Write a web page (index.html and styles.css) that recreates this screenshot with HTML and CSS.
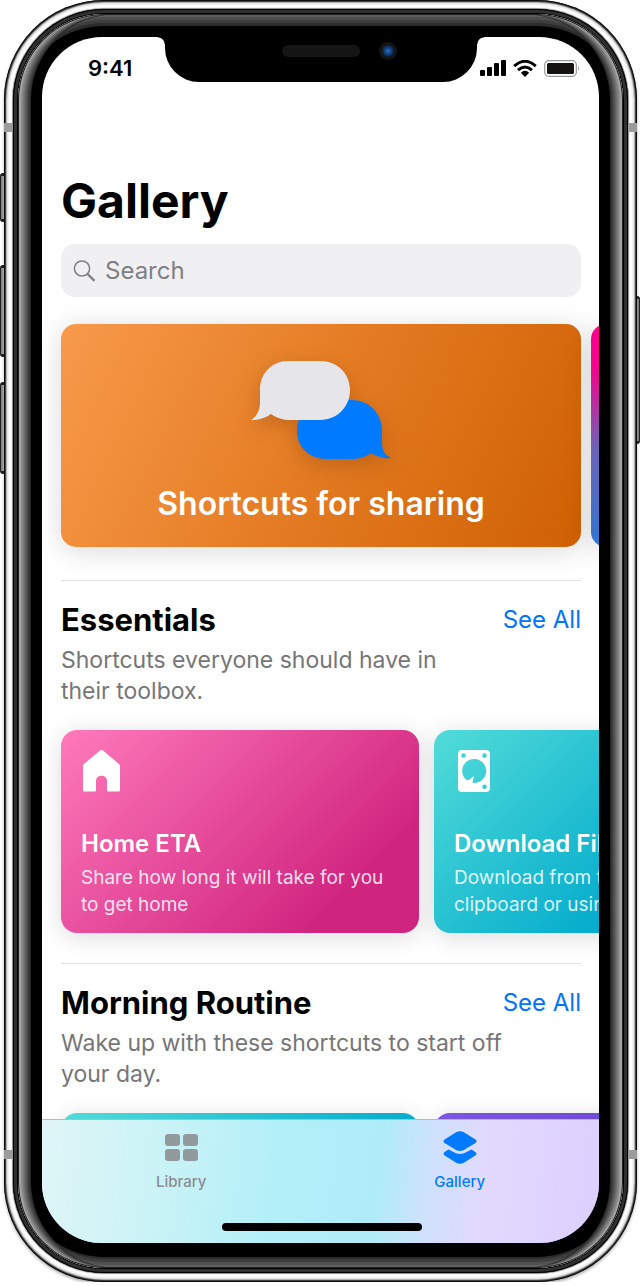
FILE: index.html
```html
<!DOCTYPE html>
<html lang="en">
<head>
<meta charset="utf-8">
<meta name="viewport" content="width=device-width, initial-scale=1">
<title>Gallery</title>
<link rel="stylesheet" href="styles.css">
</head>
<body>
<div class="device">
  <span class="key key-mute"></span>
  <span class="key key-up"></span>
  <span class="key key-down"></span>
  <span class="key key-side"></span>
  <div class="rim">
    <span class="band band-top-left"></span>
    <span class="band band-top-right"></span>
    <span class="band band-bottom-left"></span>
    <span class="band band-bottom-right"></span>
    <div class="edge">
      <div class="glass">
        <div class="screen">
          <div class="notch"><span class="speaker"></span><span class="camera"></span></div>
          <header class="status">
            <time class="clock">9:41</time>
            <div class="indicators">
              <svg width="26" height="16" viewBox="0 0 26 16" aria-hidden="true"><rect y="10" width="5" height="6" rx="1"/><rect x="7" y="7" width="5" height="9" rx="1"/><rect x="14" y="3" width="5" height="13" rx="1"/><rect x="21" width="5" height="16" rx="1"/></svg>
              <svg width="24" height="17" viewBox="0 0 24 17" aria-hidden="true"><path d="M1.2 6.2Q12-3.6 22.8 6.2M5 10.1Q12 3.8 19 10.1" fill="none" stroke="#000" stroke-width="3"/><path d="M7.8 12.7Q12 9 16.2 12.7L12 17Z"/></svg>
              <svg width="36" height="17" viewBox="0 0 36 17" aria-hidden="true"><rect x=".7" y=".7" width="31.600" height="15.600" rx="4" fill="#fff" stroke="#999" stroke-width="1.200"/><rect x="3" y="3" width="27" height="11" rx="1.500" fill="#151310"/><path d="M34 6q2 2.500 0 5z" fill="#999"/></svg>
            </div>
          </header>
          <main class="content">
            <h1 class="title">Gallery</h1>
            <label class="search">
              <svg width="24" height="22" viewBox="0 0 24 22" fill="none" stroke="#808084" aria-hidden="true"><circle cx="9" cy="8.500" r="7.600" stroke-width="1.500"/><path d="m14.500 14 7 6.800" stroke-width="2.400"/></svg>
              <input class="search-input" type="search" placeholder="Search" aria-label="Search">
            </label>
            <div class="features">
              <article class="feature feature-sharing">
                <svg class="bubbles" width="140" height="100" viewBox="0 0 140 100" aria-hidden="true">
                  <path fill="#007aff" d="M76 40h24c18 0 31 13 31 31v12c0 8 3 12 9 15-7 1-13-1-20-5-6 4-12 6-20 6H76c-18 0-30-12-30-28s12-31 30-31z"/>
                  <path fill="#e5e5ea" d="M37 1h32c18 0 30 13 30 29S87 60 69 60H40c-8 0-14-2-20-6-6 4-12 6-20 6 6-4 9-10 9-18V30C9 13 21 1 37 1z"/>
                </svg>
                <h2 class="feature-title">Shortcuts for sharing</h2>
              </article>
              <article class="feature feature-next"></article>
            </div>
            <section class="group">
              <div class="group-head"><h2 class="group-title">Essentials</h2><a class="see-all" href="#essentials">See All</a></div>
              <p class="group-text">Shortcuts everyone should have in their toolbox.</p>
              <div class="cards">
                <article class="card pink">
                  <svg width="37" height="42" viewBox="0 0 37 42" fill="#fff" aria-hidden="true"><path d="M17 .6q1.500-1 3 0L36 14q1 1 1 2v24q0 1.500-1.500 1.500h-10Q24 41.500 24 40V31c0-7-11-7-11 0v9q0 1.500-1.500 1.500h-10Q0 41.500 0 40V16q0-1 1-2z"/></svg>
                  <h3 class="card-title">Home ETA</h3>
                  <p class="card-text">Share how long it will take for you to get home</p>
                </article>
                <article class="card teal">
                  <svg class="drive" width="32" height="42" viewBox="0 0 32 42" aria-hidden="true"><path fill="#fff" fill-rule="evenodd" d="M4 0h24q4 0 4 4v34q0 4-4 4H4q-4 0-4-4V4Q0 0 4 0zM5.500 3.300a2.300 2.300 0 1 0 0 4.600 2.300 2.300 0 0 0 0-4.600zM26.500 3.300a2.300 2.300 0 1 0 0 4.600 2.300 2.300 0 0 0 0-4.600zM26.500 34.500a2.300 2.300 0 1 0 0 4.600 2.300 2.300 0 0 0 0-4.600zM14.500 32.800A12 12 0 1 0 6.500 28q3 4 5.500 1l4-3z"/></svg>
                  <h3 class="card-title">Download File</h3>
                  <p class="card-text short">Download from the clipboard or using</p>
                </article>
              </div>
            </section>
            <section class="group">
              <div class="group-head"><h2 class="group-title">Morning Routine</h2><a class="see-all" href="#morning">See All</a></div>
              <p class="group-text wide">Wake up with these shortcuts to start off your day.</p>
              <div class="cards">
                <article class="card teal"></article>
                <article class="card violet"></article>
              </div>
            </section>
          </main>
          <nav class="tabs">
            <button class="tab" type="button">
              <svg width="34" height="34" viewBox="0 0 34 34" fill="#929a9c" aria-hidden="true"><rect x="1" y="3" width="15" height="12" rx="3"/><rect x="19" y="3" width="15" height="12" rx="3"/><rect x="1" y="18" width="15" height="12" rx="3"/><rect x="19" y="18" width="15" height="12" rx="3"/></svg>
              Library
            </button>
            <button class="tab active" type="button" aria-current="page">
              <svg width="34" height="34" viewBox="0 0 34 34" fill="#007aff" aria-hidden="true"><path d="M13.500 1q3.500-1.600 7 0L32 8.300q3 2 0 4l-11.500 7q-3.500 1.600-7 0L2 12.300q-3-2 0-4z"/><path d="M5.500 18.500 13 22.300q4 1.500 8 0l7.500-3.800 3.500 2.200q3 2 0 4L20.500 32q-3.500 1.600-7 0L2 24.700q-3-2 0-4z"/></svg>
              Gallery
            </button>
            <span class="home-bar"></span>
          </nav>
        </div>
      </div>
    </div>
  </div>
</div>
</body>
</html>
```
FILE: styles.css
```css
* { box-sizing: border-box; }
body {
  margin: 0;
  background: #fff;
  color: #000;
  font-family: Inter, "Liberation Sans", sans-serif;
}
h1, h2, h3, p { margin: 0; }

/* Phone body */
.device {
  position: relative;
  height: calc(100vh - 4px);
  min-height: 600px;
  padding: 0 3px 0 4px;
}
.rim {
  position: relative;
  height: 100%;
  padding: 9px;
  border-radius: 100px;
  background: #fff;
  box-shadow:
    0 2px 3px rgba(0, 0, 0, .3),
    inset 0 0 0 1px #0b0b0b,
    inset 0 0 0 2px #444,
    inset 0 0 1px 3px #aaa,
    inset 0 0 2px 5px #eee;
}
.edge {
  height: 100%;
  padding: 5px;
  border-radius: 91px;
  background: #000;
  box-shadow: 0 0 1px 1px #888, inset 0 0 0 1px #000, inset 0 0 0 4px #303030;
}
.glass {
  position: relative;
  height: 100%;
  padding: 23px 24px 25px;
  border-radius: 86px;
  background: #000;
  box-shadow:
    inset 0 0 0 1px #222,
    inset 3px 0 #a3a3a3, inset -3px 0 #a3a3a3,
    inset 4px 0 #8f8f8f, inset -4px 0 #8f8f8f,
    inset 5px 0 #858585, inset -5px 0 #858585,
    inset 6px 0 #797979, inset -6px 0 #797979,
    inset 7px 0 #6d6d6d, inset -7px 0 #6d6d6d,
    inset 8px 0 #616161, inset -8px 0 #616161,
    inset 9px 0 #555, inset -9px 0 #555,
    inset 10px 0 #4a4a4a, inset -10px 0 #4a4a4a,
    inset 11px 0 #3f3f3f, inset -11px 0 #3f3f3f,
    inset 12px 0 #343434, inset -12px 0 #343434,
    inset 13px 0 #292929, inset -13px 0 #292929,
    inset 0 3px #5c5c5c, inset 0 -3px #626262,
    inset 0 6px #4c4c4c, inset 0 -6px #505050,
    inset 0 9px #3d3d3d, inset 0 -9px #3d3d3d,
    inset 0 12px #2b2b2b, inset 0 -11px #2b2b2b;
}
.key {
  position: absolute;
  left: 0;
  width: 6px;
  border: 1px solid #222;
  border-top-width: 3px;
  border-bottom-width: 3px;
  border-radius: 3px 0 0 3px;
  background: linear-gradient(90deg, #777, #d8dadb);
}
.key-mute { top: 173px; height: 49px; }
.key-up { top: 265px; height: 92px; }
.key-down { top: 382px; height: 92px; }
.key-side {
  top: 296px;
  right: 0;
  left: auto;
  height: 148px;
  border-radius: 0 3px 3px 0;
  background: linear-gradient(90deg, #d8dadb, #777);
}
.band {
  position: absolute;
  width: 9px;
  height: 9px;
  background: #9b9b9b;
}
.band-top-left { top: 123px; left: 0; }
.band-top-right { top: 123px; right: 0; }
.band-bottom-left { bottom: 123px; left: 0; }
.band-bottom-right { bottom: 123px; right: 0; }

/* Screen */
.screen {
  position: relative;
  display: flex;
  flex-direction: column;
  height: 100%;
  overflow: hidden;
  border-radius: 60px;
  background: #fff;
}
.notch {
  position: absolute;
  z-index: 2;
  top: 0;
  left: 50%;
  width: 312px;
  height: 45px;
  margin-left: -156px;
  border-radius: 0 0 34px 34px;
  background: #000;
}
.notch::before, .notch::after {
  content: "";
  position: absolute;
  top: 0;
  width: 7px;
  height: 7px;
}
.notch::before { right: 100%; background: radial-gradient(circle at 0 100%, transparent 6px, #000 7px); }
.notch::after { left: 100%; background: radial-gradient(circle at 100% 100%, transparent 6px, #000 7px); }
.speaker {
  position: absolute;
  top: 8px;
  left: 117px;
  width: 78px;
  height: 12px;
  border-radius: 6px;
  background: #151515;
}
.camera {
  position: absolute;
  top: 5px;
  left: 214px;
  width: 18px;
  height: 18px;
  border-radius: 50%;
  background: radial-gradient(circle, #3470b0 0, #17529a 2px, #0b2c5c 5px, #151515 6px);
}
.status {
  display: flex;
  flex: none;
  justify-content: space-between;
  align-items: center;
  height: 62px;
  padding: 0 19px 0 46px;
}
.clock { font-size: 22px; font-weight: 600; line-height: 28px; }
.indicators { display: flex; align-items: center; gap: 7px; }
.content {
  flex: 1;
  min-height: 0;
  padding: 72px 18px 0 19px;
}
.title { font-size: 48px; font-weight: 700; line-height: 60px; }
.search {
  display: flex;
  align-items: center;
  gap: 8px;
  height: 53px;
  margin-top: 13px;
  padding: 0 12px;
  border-radius: 14px;
  background: #f0f0f2;
}
.search-input {
  flex: 1;
  min-width: 0;
  padding: 0;
  border: 0;
  outline: 0;
  background: none;
  font: 400 24px/32px Inter, "Liberation Sans", sans-serif;
}
.search-input::placeholder { color: #808084; opacity: 1; }
.features { display: flex; gap: 10px; margin-top: 27px; }
.feature {
  display: flex;
  flex: 0 0 100%;
  flex-direction: column;
  align-items: center;
  height: 223px;
  padding-top: 36px;
  border-radius: 15px;
  box-shadow: 0 4px 28px rgba(0, 0, 0, .15);
}
.feature-sharing { background: linear-gradient(115deg, #f79a4b, #e67e26 45%, #cf6002); }
.feature-next { background: linear-gradient(#ff008a 8%, #f0088f 22%, #6b63b8 56%, #2f76cf); }
.bubbles { filter: drop-shadow(0 6px 10px rgba(90, 40, 0, .25)); }
.feature-title { margin-top: 24px; color: #fff; font-size: 32px; font-weight: 600; line-height: 40px; }
.group {
  margin-top: 33px;
  padding-top: 19px;
  border-top: 1px solid #e2e2e4;
}
.group + .group { margin-top: 30px; }
.group-head { display: flex; justify-content: space-between; align-items: center; }
.group-title { font-size: 31px; font-weight: 700; line-height: 40px; }
.see-all { color: #0073ff; font-size: 24px; line-height: 40px; text-decoration: none; }
.group-text {
  max-width: 400px;
  margin-top: 5px;
  color: #767678;
  font-size: 23px;
  line-height: 31px;
}
.group-text.wide { max-width: 460px; }
.cards { display: flex; gap: 15px; margin-top: 23px; }
.card {
  flex: 0 0 358px;
  height: 203px;
  padding: 20px 20px 0;
  border-radius: 16px;
  color: #fff;
  box-shadow: 0 4px 24px rgba(20, 10, 30, .14);
}
.card svg { display: block; margin-left: 2px; }
.card .drive { margin-left: 4px; }
.pink { background: linear-gradient(135deg, #ff7abb, #d0257f 80%); }
.teal { background: linear-gradient(135deg, #52dcd8, #00a9cc 68%); }
.violet { background: linear-gradient(90deg, #7d56e4, #6240c8); }
.card-title { margin-top: 36px; font-size: 24px; font-weight: 600; line-height: 32px; }
.card-text { margin-top: 4px; color: rgba(255, 255, 255, .85); font-size: 19px; line-height: 27px; }
.card-text.short { max-width: 220px; }

/* Tab bar */
.tabs {
  position: relative;
  z-index: 1;
  display: flex;
  flex: none;
  height: 124px;
  border-top: 1px solid #a9bfc4;
  background: linear-gradient(97deg, #e0f5f7 0, #c9f3f6 22%, #b3eff8 42%, #b0ecf8 60%, #cfe1fc 69%, #e1dafd 78%, #decfff 100%);
}
.tab {
  display: flex;
  flex: 1;
  flex-direction: column;
  align-items: center;
  gap: 7px;
  padding: 11px 0 0;
  border: 0;
  background: none;
  color: #8c8c91;
  font: 500 15px/20px Inter, "Liberation Sans", sans-serif;
}
.tab.active { color: #007aff; }
.home-bar {
  position: absolute;
  bottom: 12px;
  left: 50%;
  width: 200px;
  height: 8px;
  margin-left: -99px;
  border-radius: 4px;
  background: #000;
}
```
